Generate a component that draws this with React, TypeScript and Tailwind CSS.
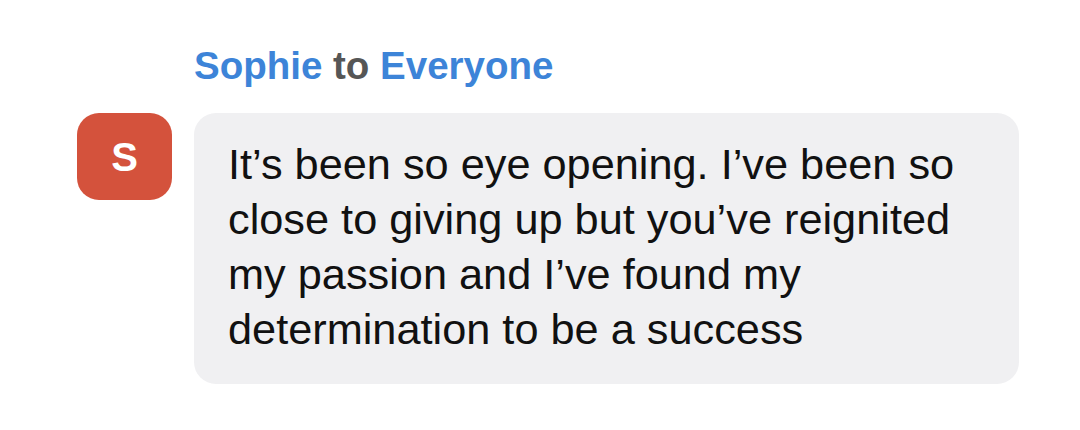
export default function App() {
  return (
    <div className="w-[1080px] h-[430px] bg-white" style={{ fontFamily: '"Liberation Sans", Arial, sans-serif' }}>
      <div className="pl-[77px] pt-[44px]">
        <div className="pl-[117px] text-[38.5px] font-bold leading-[44px]">
          <span className="text-[#3d84d8]">Sophie</span>
          <span className="text-[#565656]"> to </span>
          <span className="text-[#3d84d8]">Everyone</span>
        </div>
        <div className="flex gap-[22px] mt-[25px]">
          <div className="w-[95px] h-[87px] shrink-0 rounded-[22px] bg-[#d4523c] flex items-center justify-center text-white text-[40px] font-bold">
            S
          </div>
          <div className="w-[825px] h-[271px] rounded-[22px] bg-[#f0f0f2] pl-[34px] pr-[40px] pt-[24px] text-[43.3px] leading-[55px] text-[#111]">
            It’s been so eye opening. I’ve been so close to giving up but you’ve reignited my passion and I’ve found my determination to be a success
          </div>
        </div>
      </div>
    </div>
  );
}
